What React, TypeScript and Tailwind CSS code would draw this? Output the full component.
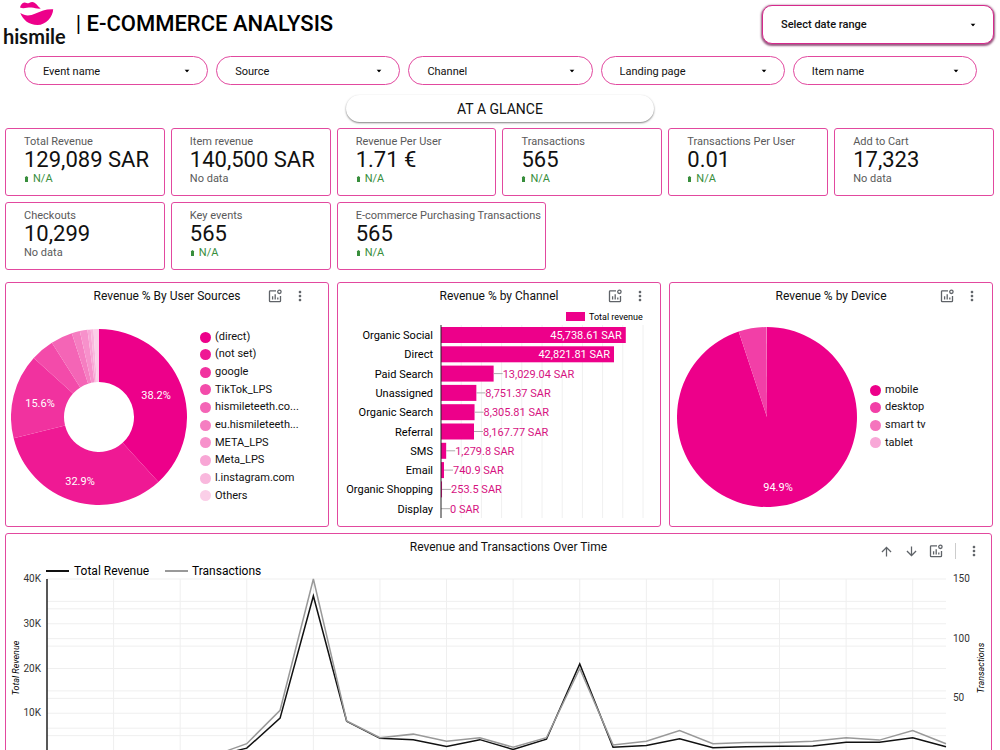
import type { ReactNode } from "react";
import { MdArrowDownward, MdArrowUpward, MdMoreVert } from "react-icons/md";

type Kpi = { label: string; value: string; trend?: boolean; wide?: boolean };
type Slice = { label: string; share: number; color: string };

const filters = ["Event name", "Source", "Channel", "Landing page", "Item name"];

const kpis: Kpi[] = [
	{ label: "Total Revenue", value: "129,089 SAR", trend: true },
	{ label: "Item revenue", value: "140,500 SAR" },
	{ label: "Revenue Per User", value: "1.71 €", trend: true },
	{ label: "Transactions", value: "565", trend: true },
	{ label: "Transactions Per User", value: "0.01", trend: true },
	{ label: "Add to Cart", value: "17,323" },
	{ label: "Checkouts", value: "10,299" },
	{ label: "Key events", value: "565", trend: true },
	{ label: "E-commerce Purchasing Transactions", value: "565", trend: true, wide: true },
];

const sources: Slice[] = [
	{ label: "(direct)", share: 38.2, color: "#ed008a" },
	{ label: "(not set)", share: 32.9, color: "#ef1994" },
	{ label: "google", share: 15.6, color: "#f1329f" },
	{ label: "TikTok_LPS", share: 4.3, color: "#f34baa" },
	{ label: "hismileteeth.co...", share: 4, color: "#f465b6" },
	{ label: "eu.hismileteeth...", share: 1.5, color: "#f57ec1" },
	{ label: "META_LPS", share: 1.4, color: "#f791cb" },
	{ label: "Meta_LPS", share: 0.6, color: "#f8a6d5" },
	{ label: "l.instagram.com", share: 0.5, color: "#f9b8dd" },
	{ label: "Others", share: 1, color: "#fbcfe8" },
];

const devices: Slice[] = [
	{ label: "mobile", share: 94.9, color: "#ed008a" },
	{ label: "desktop", share: 5.04, color: "#f23fa7" },
	{ label: "smart tv", share: 0.04, color: "#f574bd" },
	{ label: "tablet", share: 0.02, color: "#f8a8d7" },
];

const channels: [string, number][] = [
	["Organic Social", 45738.61],
	["Direct", 42821.81],
	["Paid Search", 13029.04],
	["Unassigned", 8751.37],
	["Organic Search", 8305.81],
	["Referral", 8167.77],
	["SMS", 1279.8],
	["Email", 740.9],
	["Organic Shopping", 253.5],
	["Display", 0],
];

// thousands of SAR per day
const revenue = [0.1, 0.1, 0.2, 0.1, 0.2, 0.4, 2.2, 8.9, 36.2, 8.2, 4.4, 4.1, 2.6, 4.1, 1.9, 4.2, 21, 2.4, 2.8, 4.3, 2.3, 2.5, 2.6, 2.7, 3.5, 3.5, 4.5, 2.5];
const transactions = [0, 1, 0, 1, 1, 2, 12, 40, 150, 31, 17, 20, 14, 17, 9, 17, 75, 11, 14, 23, 12, 13, 13, 14, 17, 15, 23, 12];

const polar = (r: number, share: number) => {
	const a = (share / 100) * Math.PI * 2;
	return `${(r * Math.sin(a)).toFixed(2)} ${(-r * Math.cos(a)).toFixed(2)}`;
};

const slicePath = (from: number, to: number, outer: number, inner: number) => {
	const large = to - from > 50 ? 1 : 0;
	const arc = `M${polar(outer, from)}A${outer} ${outer} 0 ${large} 1 ${polar(outer, to)}`;
	return inner ? `${arc}L${polar(inner, to)}A${inner} ${inner} 0 ${large} 0 ${polar(inner, from)}Z` : `${arc}L0 0Z`;
};

function Caret() {
	return (
		<svg viewBox="0 0 6 3" className="pointer-events-none absolute right-[18px] top-1/2 h-[3px] w-[6px] -translate-y-1/2 fill-black">
			<path d="M.5 0h5L3 3z" />
		</svg>
	);
}

function ExploreIcon() {
	return (
		<svg viewBox="0 0 14 14" fill="none" stroke="#5f6368" strokeWidth="1.3" className="h-[14px] w-[14px]">
			<path d="M8 1.8H2.3a.8.8 0 0 0-.8.8v9.300a.8.8 0 0 0 .8.8h9.400a.8.8 0 0 0 .8-.8V7" />
			<path d="M4.600 10.500V7.200M7.200 10.500V5.200M9.800 10.500V8.500" />
			<circle cx="11.400" cy="2.800" r="1.700" />
		</svg>
	);
}

function Logo() {
	return (
		<div className="flex flex-col items-center">
			<svg viewBox="0 0 40 25" className="h-[25px] w-[40px] fill-[#ed008a]">
				<path d="M6 7.600C6.500 5 8 2.600 10.500 2.400c1.500-.1 2.500.9 3.800.9 1.300 0 2.200-1.300 3.900-1.200 3.600.2 4.800 3.900 8.600 6.500-3.300.6-6-.9-9.300-1.100C13 7.300 10 9 6 7.600z" />
				<path d="M6.300 13c5 3.300 9.700 3 15.200.5 5.500-2.700 11-4.700 17.700-4.300C39 16.500 32 25 23.500 25 15 25 9 20 6.300 13z" />
			</svg>
			<span className="font-['Lato'] text-[20px] font-bold leading-[22px]">hismile</span>
		</div>
	);
}

function KpiCard({ label, value, trend, wide }: Kpi) {
	return (
		<div className={`rounded-[3px] border border-[#e2499f] pb-2 pl-[18px] pt-[5px] ${wide ? "col-span-2 justify-self-start pr-1" : ""}`}>
			<div className="whitespace-nowrap text-[11px] leading-4 text-[#5a5a5a]">{label}</div>
			<div className="whitespace-nowrap text-[22px] leading-[20px]">{value}</div>
			{trend ? (
				<div className="flex items-center gap-1 text-[11px] leading-[17px] text-[#388e3c]">
					<svg viewBox="0 0 5 6" className="h-[6px] w-[5px] fill-[#388e3c]">
						<path d="M2.500 0L4.500 1.500H4V6H1V1.500H.5z" />
					</svg>
					N/A
				</div>
			) : (
				<div className="text-[11px] leading-[17px] text-[#5a5a5a]">No data</div>
			)}
		</div>
	);
}

function ChartCard({ title, inset, children }: { title: string; inset?: boolean; children: ReactNode }) {
	return (
		<section className="rounded-[3px] border border-[#e2499f]">
			<header className={`grid h-[26px] grid-cols-[1fr_auto_1fr] items-center ${inset ? "px-5" : "px-3"}`}>
				<h2 className="col-start-2 text-[12px] leading-[18px]">{title}</h2>
				<div className="flex items-center justify-end gap-[10px]">
					<button type="button" aria-label="Explore chart">
						<ExploreIcon />
					</button>
					<button type="button" aria-label="More options">
						<MdMoreVert className="h-4 w-4 fill-[#5f6368]" />
					</button>
				</div>
			</header>
			{children}
		</section>
	);
}

function Pie({ slices, r, inner, labels, className }: { slices: Slice[]; r: number; inner: number; labels: [number, number, string][]; className: string }) {
	let acc = 0;
	return (
		<svg viewBox={`${-r} ${-r} ${r * 2} ${r * 2}`} className={`shrink-0 ${className}`}>
			{slices.map((s) => {
				const from = acc;
				acc += s.share;
				return <path key={s.label} d={slicePath(from, acc, r, inner)} fill={s.color} />;
			})}
			{labels.map(([x, y, text]) => (
				<text key={text} x={x} y={y} textAnchor="middle" fontSize="11" fill="#fff">
					{text}
				</text>
			))}
		</svg>
	);
}

function Legend({ slices, className }: { slices: Slice[]; className: string }) {
	return (
		<ul className={`ml-[13px] flex flex-col justify-between ${className}`}>
			{slices.map((s) => (
				<li key={s.label} className="flex h-4 items-center gap-1 whitespace-nowrap text-[11px]">
					<span className="h-[11px] w-[11px] rounded-full" style={{ backgroundColor: s.color }} />
					{s.label}
				</li>
			))}
		</ul>
	);
}

function ChannelBars() {
	const x0 = 103;
	const scale = 202 / 50000;
	return (
		<svg viewBox="0 0 322 217" className="w-full" fontSize="11">
			{Array.from({ length: 10 }, (_, i) => (
				<path key={i} d={`M${x0 + (i + 1) * 20.2} 16V209`} stroke="#f0f0f0" />
			))}
			<rect x="228" y="3" width="19" height="9" fill="#ed008a" />
			<text x="251" y="11" fontSize="9">
				Total revenue
			</text>
			{channels.map(([name, value], i) => {
				const y = 26 + i * 19.3;
				const end = x0 + value * scale;
				const text = `${value.toLocaleString("en-US")} SAR`;
				const inside = value > 20000;
				return (
					<g key={name}>
						<text x={x0 - 8} y={y + 4} textAnchor="end">
							{name}
						</text>
						<rect x={x0} y={y - 8} width={value * scale} height="16" fill="#ed008a" />
						{!inside && <path d={`M${end} ${y}h9`} stroke="#aaa" />}
						<text x={inside ? end - 4 : end + 9} y={y + 4} textAnchor={inside ? "end" : "start"} fill={inside ? "#fff" : "#d6127f"}>
							{text}
						</text>
					</g>
				);
			})}
			<path d={`M${x0} 16V209`} stroke="#222" />
		</svg>
	);
}

function TimeChart() {
	const left = 41;
	const right = 940;
	const top = 15;
	const base = 194;
	const step = (right - left) / 27;
	const points = (data: number[], max: number) => data.map((v, i) => `${left + i * step},${base - (v / max) * (base - top)}`).join(" ");
	const yAt = (ratio: number) => base - ratio * (base - top);
	return (
		<svg viewBox="0 0 985 216" className="w-full" fontSize="10">
			<g stroke="#efefef">
				{Array.from({ length: 9 }, (_, i) => (
					<path key={i} d={`M${left} ${yAt(i / 8)}H${right}`} />
				))}
				{[1, 2, 4, 5].map((i) => (
					<path key={i} d={`M${left} ${yAt(i / 6)}H${right}`} />
				))}
				{Array.from({ length: 13 }, (_, i) => (
					<path key={i} d={`M${left + (i + 1) * 2 * step} ${top}V${base}`} />
				))}
			</g>
			<path d={`M${left} ${top}V${base}H${right}`} fill="none" stroke="#222" strokeWidth="1.500" />
			{[10, 20, 30, 40].map((v) => (
				<text key={v} x={left - 6} y={yAt(v / 40) + 3} textAnchor="end" fill="#333">
					{`${v}K`}
				</text>
			))}
			{[50, 100, 150].map((v) => (
				<text key={v} x={right + 7} y={yAt(v / 150) + 3} fill="#333">
					{v}
				</text>
			))}
			<polyline points={points(revenue, 40)} fill="none" stroke="#111" strokeWidth="1.500" />
			<polyline points={points(transactions, 150)} fill="none" stroke="#999" strokeWidth="1.500" />
			<text transform="translate(13 104) rotate(-90)" textAnchor="middle" fontSize="9" fontStyle="italic">
				Total Revenue
			</text>
			<text transform="translate(978 104) rotate(-90)" textAnchor="middle" fontSize="9" fontStyle="italic">
				Transactions
			</text>
			<path d="M40 7h23" stroke="#111" strokeWidth="2" />
			<text x="68" y="11" fontSize="12">
				Total Revenue
			</text>
			<path d="M159 7h23" stroke="#999" strokeWidth="2" />
			<text x="186" y="11" fontSize="12">
				Transactions
			</text>
		</svg>
	);
}

export default function App() {
	return (
		<main className="min-h-screen bg-white font-['Roboto',sans-serif] text-[#111]">
			<header className="flex h-12 items-start pl-[3px] pr-[6px]">
				<Logo />
				<h1 className="ml-[10px] mt-2 text-[22px] font-medium leading-8 text-black">
					<span className="font-normal">|</span> E-COMMERCE ANALYSIS
				</h1>
				<div className="relative ml-auto mt-[5px] w-[232px]">
					<select
						aria-label="Date range"
						className="block h-[39px] w-full appearance-none rounded-[10px] border border-[#d6298c] bg-white pl-[18px] pt-px text-[11px] font-medium shadow-[0_1px_2px_1px_rgba(110,20,75,0.700)]"
					>
						<option>Select date range</option>
					</select>
					<Caret />
				</div>
			</header>

			{/* filters */}
			<div className="mt-2 grid grid-cols-5 gap-2 pl-6 pr-[23px]">
				{filters.map((name) => (
					<div key={name} className="relative">
						<select aria-label={name} className="block h-[29px] w-full appearance-none rounded-full border border-[#e2499f] bg-white pl-[18px] pt-[3px] text-[11px]">
							<option>{name}</option>
						</select>
						<Caret />
					</div>
				))}
			</div>

			<h2 className="mx-auto mt-[10px] h-[27px] w-[308px] rounded-full text-center text-[14px] leading-[28px] shadow-[0_1px_2px_rgba(0,0,0,0.500)]">AT A GLANCE</h2>

			<div className="mt-[6px] grid grid-cols-6 gap-x-[6px] gap-y-[6px] pl-[5px] pr-[6px]">
				{kpis.map((k) => (
					<KpiCard key={k.label} {...k} />
				))}
			</div>

			<div className="mt-3 grid grid-cols-3 gap-2 pl-[5px] pr-[7px]">
				<ChartCard title="Revenue % By User Sources" inset>
					<div className="flex h-[215px] items-center pl-[5px]">
						<Pie
							slices={sources}
							r={88}
							inner={35}
							className="h-[176px] w-[176px]"
							labels={[
								[57, -18, "38.2%"],
								[-19, 68, "32.9%"],
								[-59, -10, "15.6%"],
							]}
						/>
						<Legend slices={sources} className="h-[175px]" />
					</div>
				</ChartCard>
				<ChartCard title="Revenue % by Channel">
					<ChannelBars />
				</ChartCard>
				<ChartCard title="Revenue % by Device">
					<div className="flex h-[215px] items-center pl-[7px]">
						<Pie slices={devices} r={90} inner={0} className="h-[180px] w-[180px]" labels={[[11, 74, "94.9%"]]} />
						<Legend slices={devices} className="h-[69px]" />
					</div>
				</ChartCard>
			</div>

			<section className="ml-[5px] mr-2 mt-[6px] rounded-[3px] border border-[#e2499f]">
				<header className="grid grid-cols-[1fr_auto_1fr] items-start pl-5 pt-1">
					<h2 className="col-start-2 text-[12px] leading-[18px]">Revenue and Transactions Over Time</h2>
					<div className="flex h-[26px] items-center justify-end gap-[10px] pr-[9px]">
						<button type="button" aria-label="Drill up">
							<MdArrowUpward className="h-[15px] w-[15px] fill-[#5f6368]" />
						</button>
						<button type="button" aria-label="Drill down">
							<MdArrowDownward className="h-[15px] w-[15px] fill-[#5f6368]" />
						</button>
						<button type="button" aria-label="Explore chart">
							<ExploreIcon />
						</button>
						<span className="ml-[2px] h-4 w-px bg-[#ccc]" />
						<button type="button" aria-label="More options">
							<MdMoreVert className="h-4 w-4 fill-[#5f6368]" />
						</button>
					</div>
				</header>
				<TimeChart />
			</section>
		</main>
	);
}
